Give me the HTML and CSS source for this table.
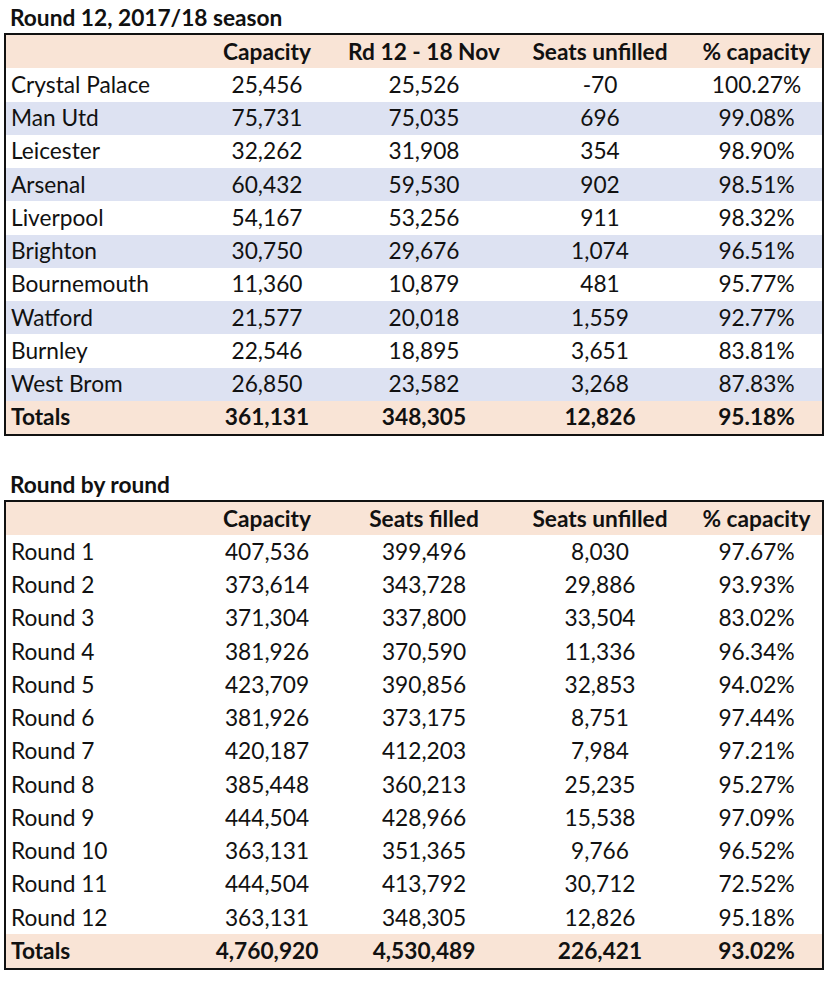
FILE: index.html
```html
<!DOCTYPE html>
<html>
<head>
<meta charset="utf-8">
<link rel="stylesheet" href="styles.css">
</head>
<body>
<div class="page">
  <h2 class="title">Round 12, 2017/18 season</h2>
  <table class="tbl striped">
    <colgroup><col class="c1"><col class="c2"><col class="c3"><col class="c4"><col class="c5"></colgroup>
    <thead>
      <tr class="head"><th></th><th>Capacity</th><th>Rd 12 - 18 Nov</th><th>Seats unfilled</th><th>% capacity</th></tr>
    </thead>
    <tbody>
      <tr><td>Crystal Palace</td><td>25,456</td><td>25,526</td><td>-70</td><td>100.27%</td></tr>
      <tr><td>Man Utd</td><td>75,731</td><td>75,035</td><td>696</td><td>99.08%</td></tr>
      <tr><td>Leicester</td><td>32,262</td><td>31,908</td><td>354</td><td>98.90%</td></tr>
      <tr><td>Arsenal</td><td>60,432</td><td>59,530</td><td>902</td><td>98.51%</td></tr>
      <tr><td>Liverpool</td><td>54,167</td><td>53,256</td><td>911</td><td>98.32%</td></tr>
      <tr><td>Brighton</td><td>30,750</td><td>29,676</td><td>1,074</td><td>96.51%</td></tr>
      <tr><td>Bournemouth</td><td>11,360</td><td>10,879</td><td>481</td><td>95.77%</td></tr>
      <tr><td>Watford</td><td>21,577</td><td>20,018</td><td>1,559</td><td>92.77%</td></tr>
      <tr><td>Burnley</td><td>22,546</td><td>18,895</td><td>3,651</td><td>83.81%</td></tr>
      <tr><td>West Brom</td><td>26,850</td><td>23,582</td><td>3,268</td><td>87.83%</td></tr>
      <tr class="total"><td>Totals</td><td>361,131</td><td>348,305</td><td>12,826</td><td>95.18%</td></tr>
    </tbody>
  </table>

  <h2 class="title second">Round by round</h2>
  <table class="tbl">
    <colgroup><col class="c1"><col class="c2"><col class="c3"><col class="c4"><col class="c5"></colgroup>
    <thead>
      <tr class="head"><th></th><th>Capacity</th><th>Seats filled</th><th>Seats unfilled</th><th>% capacity</th></tr>
    </thead>
    <tbody>
      <tr><td>Round 1</td><td>407,536</td><td>399,496</td><td>8,030</td><td>97.67%</td></tr>
      <tr><td>Round 2</td><td>373,614</td><td>343,728</td><td>29,886</td><td>93.93%</td></tr>
      <tr><td>Round 3</td><td>371,304</td><td>337,800</td><td>33,504</td><td>83.02%</td></tr>
      <tr><td>Round 4</td><td>381,926</td><td>370,590</td><td>11,336</td><td>96.34%</td></tr>
      <tr><td>Round 5</td><td>423,709</td><td>390,856</td><td>32,853</td><td>94.02%</td></tr>
      <tr><td>Round 6</td><td>381,926</td><td>373,175</td><td>8,751</td><td>97.44%</td></tr>
      <tr><td>Round 7</td><td>420,187</td><td>412,203</td><td>7,984</td><td>97.21%</td></tr>
      <tr><td>Round 8</td><td>385,448</td><td>360,213</td><td>25,235</td><td>95.27%</td></tr>
      <tr><td>Round 9</td><td>444,504</td><td>428,966</td><td>15,538</td><td>97.09%</td></tr>
      <tr><td>Round 10</td><td>363,131</td><td>351,365</td><td>9,766</td><td>96.52%</td></tr>
      <tr><td>Round 11</td><td>444,504</td><td>413,792</td><td>30,712</td><td>72.52%</td></tr>
      <tr><td>Round 12</td><td>363,131</td><td>348,305</td><td>12,826</td><td>95.18%</td></tr>
      <tr class="total"><td>Totals</td><td>4,760,920</td><td>4,530,489</td><td>226,421</td><td>93.02%</td></tr>
    </tbody>
  </table>
</div>
</body>
</html>
```
FILE: styles.css
```css
html, body {
  margin: 0;
  padding: 0;
  background: #ffffff;
}
.page {
  padding: 0 4px 0 4px;
  font-family: Lato, "Open Sans", sans-serif;
  color: #111111;
}
.title {
  margin: 0;
  padding: 3px 0 0 6px;
  height: 33px;
  box-sizing: border-box;
  font-size: 22.7px;
  font-weight: 700;
  line-height: 30px;
}
.title.second {
  margin-top: 34px;
  height: 30px;
  padding-top: 0;
}
.tbl {
  width: 820px;
  border-collapse: collapse;
  table-layout: fixed;
  border: 2px solid #111;
  font-size: 22.7px;
}
.c1 { width: 184px; }
.c2 { width: 156px; }
.c3 { width: 158px; }
.c4 { width: 194px; }
.c5 { width: auto; }
.tbl th, .tbl td {
  height: 33.25px;
  padding: 0;
  text-align: center;
  vertical-align: middle;
  line-height: 26px;
  white-space: nowrap;
}
.tbl td:first-child {
  text-align: left;
  padding-left: 5px;
}
.tbl th:last-child, .tbl td:last-child {
  padding-right: 6px;
}
.tbl th {
  font-weight: 700;
}
.head, .total {
  background: #f9e4d6;
}
.total td {
  font-weight: 700;
}
.striped tbody tr:nth-child(even):not(.total) {
  background: #dde2f2;
}
```
